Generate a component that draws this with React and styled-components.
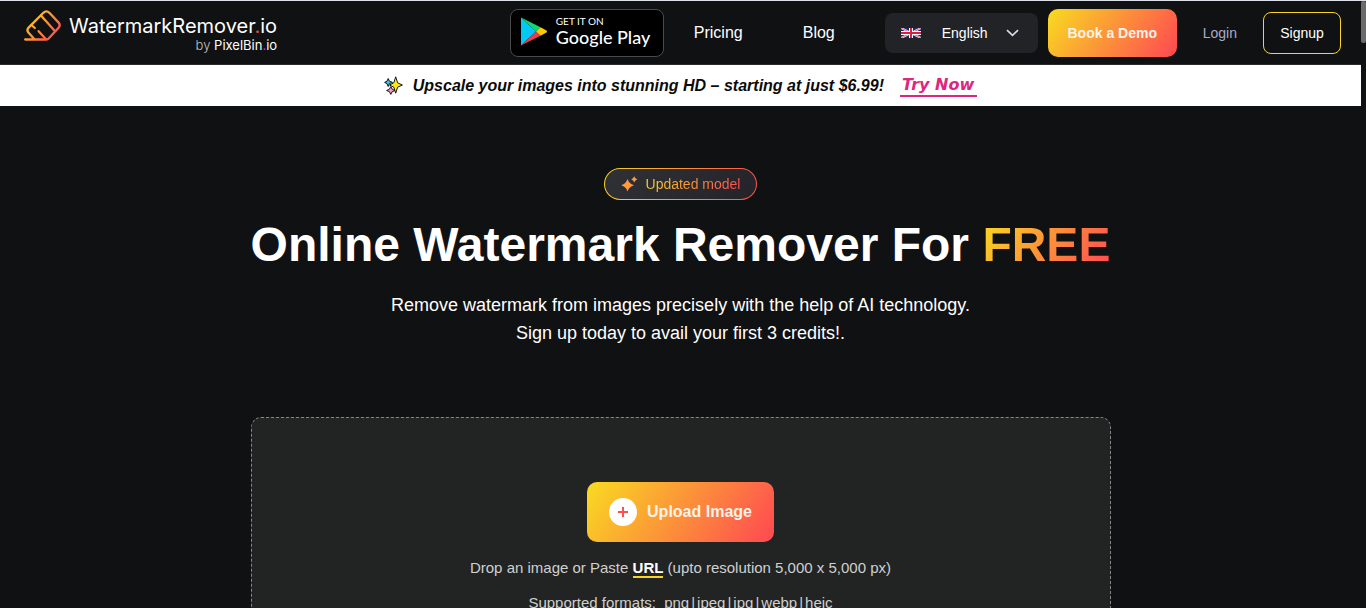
import React, { useState } from 'react';
import styled, { createGlobalStyle } from 'styled-components';

const GlobalStyle = createGlobalStyle`
  * {
    box-sizing: border-box;
  }

  body {
    margin: 0;
    background: #101113;
    color: #fff;
    font-family: 'Liberation Sans', Arial, sans-serif;
  }

  a {
    color: inherit;
    text-decoration: none;
  }

  button,
  select {
    font-family: inherit;
    cursor: pointer;
  }
`;

const brandGradient = 'linear-gradient(125deg, #f9d423 5%, #ff4e50 95%)';

const Shell = styled.div`
  display: flex;
  height: 100vh;
  overflow: hidden;
  border-top: 1px solid #dfe1ea;
`;

const Page = styled.div`
  flex: 1;
  min-width: 0;
`;

const ScrollTrack = styled.div`
  width: 5px;
`;

const ScrollThumb = styled.div`
  height: 42px;
  border-radius: 2px;
  background: #6b6b6b;
`;

const Header = styled.header`
  display: flex;
  align-items: center;
  justify-content: space-between;
  height: 64px;
  padding: 0 20px 0 24px;
  border-bottom: 1px solid #2a2b2c;
`;

const Logo = styled.a`
  display: flex;
  gap: 8px;
  padding-bottom: 4px;
  font-family: Inter, sans-serif;
`;

const LogoText = styled.span`
  display: flex;
  flex-direction: column;
  align-items: flex-end;
  padding-top: 4px;
  font-size: 20px;
  line-height: 24px;
  white-space: nowrap;
`;

const LogoByline = styled.span`
  font-size: 13px;
  line-height: 14px;
`;

const Thin = styled.span`
  font-weight: 300;
  color: #c4c4c4;
`;

const Dot = styled.span`
  color: ${props => props.color};
`;

const Nav = styled.nav`
  display: flex;
  align-items: center;
`;

const StoreBadge = styled.a`
  display: flex;
  align-items: center;
  gap: 8px;
  width: 154px;
  height: 48px;
  padding: 0 0 2px 10px;
  margin-right: 30px;
  border: 1px solid #4a4a4a;
  border-radius: 8px;
  background: #000;
  font-family: Lato, sans-serif;
  white-space: nowrap;
`;

const StoreText = styled.span`
  display: flex;
  flex-direction: column;
`;

const StoreSmall = styled.span`
  font-size: 10px;
  line-height: 10px;
`;

const StoreName = styled.span`
  font-size: 18px;
  font-weight: 500;
  line-height: 22px;
`;

const NavLinks = styled.div`
  display: flex;
  gap: 60px;
  margin-right: 50px;
  font-size: 16px;
`;

const LanguagePicker = styled.label`
  display: flex;
  align-items: center;
  width: 153px;
  height: 40px;
  padding: 0 19px 0 16px;
  margin-right: 10px;
  border-radius: 8px;
  background: #222326;
`;

const LanguageSelect = styled.select`
  flex: 1;
  min-width: 0;
  appearance: none;
  padding: 0 0 0 21px;
  border: 0;
  background: transparent;
  color: #fff;
  font-size: 14px;
`;

const DemoButton = styled.button`
  width: 129px;
  height: 48px;
  margin-right: 26px;
  padding: 0;
  border: 0;
  border-radius: 10px;
  background: ${brandGradient};
  color: #fff3ea;
  font-size: 14px;
  font-weight: 700;
`;

const LoginLink = styled.a`
  margin-right: 26px;
  color: #a9acc6;
  font-size: 14px;
`;

const SignupButton = styled.button`
  width: 78px;
  height: 42px;
  padding: 0;
  border: 1px solid #f9d423;
  border-radius: 8px;
  background: transparent;
  color: #fff;
  font-size: 14px;
`;

const Banner = styled.div`
  display: flex;
  align-items: center;
  justify-content: center;
  height: 41px;
  background: #fff;
  color: #0b0b0b;
  font-size: 16px;
  font-style: italic;
  font-weight: 700;
`;

const BannerText = styled.span`
  margin: 0 16px 0 10px;
`;

const TryLink = styled.a`
  padding: 0 3px 0 2px;
  border-bottom: 2px solid #dc2681;
  color: #dc2681;
  font-family: 'DejaVu Sans', sans-serif;
  font-size: 16px;
  line-height: 20px;
`;

const Hero = styled.main`
  display: flex;
  flex-direction: column;
  align-items: center;
  padding-top: 62px;
`;

const ModelBadge = styled.div`
  display: flex;
  align-items: center;
  gap: 8px;
  height: 32px;
  padding: 0 16px;
  border: 1px solid transparent;
  border-radius: 16px;
  background: linear-gradient(135deg, #303136, #242329) padding-box,
    linear-gradient(100deg, #f9d423, #ff4e50) border-box;
  font-size: 14px;
`;

const GradientText = styled.span`
  background: ${brandGradient};
  background-clip: text;
  -webkit-background-clip: text;
  color: transparent;
`;

const Title = styled.h1`
  margin: 15px 0 0;
  font-size: 48px;
  line-height: 60px;
  white-space: nowrap;
`;

const Subtitle = styled.p`
  margin: 16px 0 0;
  font-size: 18px;
  line-height: 28px;
  text-align: center;
`;

const DropZone = styled.section`
  display: flex;
  flex-direction: column;
  align-items: center;
  width: 100%;
  max-width: 860px;
  margin-top: 70px;
  padding: 64px 0;
  border: 1px dashed #85878a;
  border-radius: 10px;
  background: #222423;
  color: #d0d0d0;
`;

const UploadButton = styled.button`
  display: flex;
  align-items: center;
  gap: 10px;
  height: 60px;
  padding: 0 22px;
  margin-bottom: 16px;
  border: 0;
  border-radius: 10px;
  background: ${brandGradient};
  color: #fff3ea;
  font-size: 16px;
  font-weight: 700;
`;

const DropLine = styled.p`
  margin: 0 0 15px;
  font-size: 15px;
  line-height: 20px;
`;

const UrlLink = styled.a`
  border-bottom: 2px solid #f9d423;
  color: #fff;
  font-weight: 700;
`;

const Formats = styled.span`
  display: inline-flex;
  gap: 2px;
  margin-left: 4px;
`;

function LogoMark() {
  return (
    <svg width="37" height="33" viewBox="0 0 37 33" fill="none" aria-hidden="true">
      <defs>
        <linearGradient id="mark" x1="6" y1="4" x2="31" y2="27" gradientUnits="userSpaceOnUse">
          <stop stopColor="#f9d423" />
          <stop offset="1" stopColor="#ff4e50" />
        </linearGradient>
      </defs>
      <g stroke="url(#mark)" strokeWidth="2.3" strokeLinecap="round" strokeLinejoin="round">
        <path d="M1.2 29.5H22.5Q23.6 29.5 24.4 28.7L34.4 18Q37 15.2 34.4 12.4L25.4 2.8Q22.4 0 19.4 2.8L4.6 17.6Q2.4 20 4.4 22.6L9.8 28.6" />
        <path d="M17 5.4L30.6 20.8M14.6 21.2L21.8 29M7.4 15L10.8 18" />
      </g>
    </svg>
  );
}

function PlayMark() {
  return (
    <svg width="27" height="29" viewBox="0 0 27 29" aria-hidden="true">
      <path d="M0 .5V28.5L15 14.5Z" fill="#00c8f8" />
      <path d="M0 .5L19.5 10.2L15 14.5Z" fill="#12d66f" />
      <path d="M0 28.5L19.5 18.8L15 14.5Z" fill="#ea3b50" />
      <path d="M19.5 10.2L25.5 13.5Q26.5 14.5 25.5 15.5L19.5 18.8L15 14.5Z" fill="#ffc900" />
    </svg>
  );
}

function Flag() {
  return (
    <svg width="20" height="10" viewBox="0 0 20 10" aria-hidden="true">
      <rect width="20" height="10" fill="#1b2770" />
      <path d="M0 0L20 10M20 0L0 10" stroke="#fff" strokeWidth="2" />
      <path d="M0 0L20 10M20 0L0 10" stroke="#d8213b" strokeWidth=".7" />
      <path d="M10 0V10M0 5H20" stroke="#fff" strokeWidth="4" />
      <path d="M10 0V10M0 5H20" stroke="#d8213b" strokeWidth="2" />
    </svg>
  );
}

function Chevron() {
  return (
    <svg width="13" height="8" viewBox="0 0 13 8" fill="none" aria-hidden="true">
      <path d="M1 1.2L6.5 6.3L12 1.2" stroke="#d9dbe8" strokeWidth="1.7" />
    </svg>
  );
}

function Sparkles() {
  return (
    <svg width="19" height="19" viewBox="0 0 19 19" stroke="#171717" strokeWidth="1" strokeLinejoin="round" aria-hidden="true">
      <path d="M4.2 2.5L5.4 5.2L8.5 6.4L5.4 7.6L4.2 10.5L3 7.6L.6 6.4L3 5.2Z" fill="#45bce0" />
      <path d="M6.8 10.5L8.2 13.2L11 14.5L8.2 15.7L6.8 18.4L5.4 15.7L2.6 14.5L5.4 13.2Z" fill="#f29ac0" />
      <path d="M11.7 .8L13.6 6.8L18.4 9L13.6 11.2L11.7 17.2L9.8 11.2L5.5 9L9.8 6.8Z" fill="#ffe817" />
    </svg>
  );
}

function ModelStars() {
  return (
    <svg width="17" height="16" viewBox="0 0 17 16" fill="#ff9a3d" aria-hidden="true">
      <path d="M6.5 3Q8 7.7 13 9.2Q8 10.7 6.5 15.5Q5 10.7 .3 9.2Q5 7.7 6.5 3Z" />
      <path d="M13.2 .2Q14 2.5 16.4 3.2Q14 4 13.2 6.4Q12.4 4 10.2 3.2Q12.4 2.5 13.2 .2Z" />
    </svg>
  );
}

function PlusCircle() {
  return (
    <svg width="28" height="28" viewBox="0 0 28 28" aria-hidden="true">
      <circle cx="14" cy="14" r="14" fill="#fff" />
      <path d="M14 9V19M9 14H19" stroke="#ff4e50" strokeWidth="2" />
    </svg>
  );
}

function App() {
  const [language, setLanguage] = useState('en');
  return (
    <>
      <GlobalStyle />
      <Shell>
        <Page>
          <Header>
            <Logo href="#home">
              <LogoMark />
              <LogoText>
                <span>
                  WatermarkRemover<Dot color="#f0443e">.</Dot>io
                </span>
                <LogoByline>
                  <Thin>by</Thin> PixelBin<Dot color="#c42fd0">.</Dot>io
                </LogoByline>
              </LogoText>
            </Logo>
            <Nav>
              <StoreBadge href="#play">
                <PlayMark />
                <StoreText>
                  <StoreSmall>GET IT ON</StoreSmall>
                  <StoreName>Google Play</StoreName>
                </StoreText>
              </StoreBadge>
              <NavLinks>
                <a href="#pricing">Pricing</a>
                <a href="#blog">Blog</a>
              </NavLinks>
              <LanguagePicker>
                <Flag />
                <LanguageSelect
                  aria-label="Language"
                  value={language}
                  onChange={e => setLanguage(e.target.value)}
                >
                  <option value="en">English</option>
                </LanguageSelect>
                <Chevron />
              </LanguagePicker>
              <DemoButton type="button">Book a Demo</DemoButton>
              <LoginLink href="#login">Login</LoginLink>
              <SignupButton type="button">Signup</SignupButton>
            </Nav>
          </Header>
          <Banner>
            <Sparkles />
            <BannerText>
              Upscale your images into stunning HD – starting at just $6.99!
            </BannerText>
            <TryLink href="#upscale">Try Now</TryLink>
          </Banner>
          <Hero>
            <ModelBadge>
              <ModelStars />
              <GradientText>Updated model</GradientText>
            </ModelBadge>
            <Title>
              Online Watermark Remover For <GradientText>FREE</GradientText>
            </Title>
            <Subtitle>
              Remove watermark from images precisely with the help of AI technology.
              <br />
              Sign up today to avail your first 3 credits!.
            </Subtitle>
            <DropZone>
              <UploadButton type="button">
                <PlusCircle />
                Upload Image
              </UploadButton>
              <DropLine>
                Drop an image or Paste <UrlLink href="#url">URL</UrlLink> (upto
                resolution 5,000 x 5,000 px)
              </DropLine>
              <DropLine>
                Supported formats:{' '}
                <Formats>
                  <span>png</span>|<span>jpeg</span>|<span>jpg</span>|
                  <span>webp</span>|<span>heic</span>
                </Formats>
              </DropLine>
            </DropZone>
          </Hero>
        </Page>
        <ScrollTrack>
          <ScrollThumb />
        </ScrollTrack>
      </Shell>
    </>
  );
}

export default App;
